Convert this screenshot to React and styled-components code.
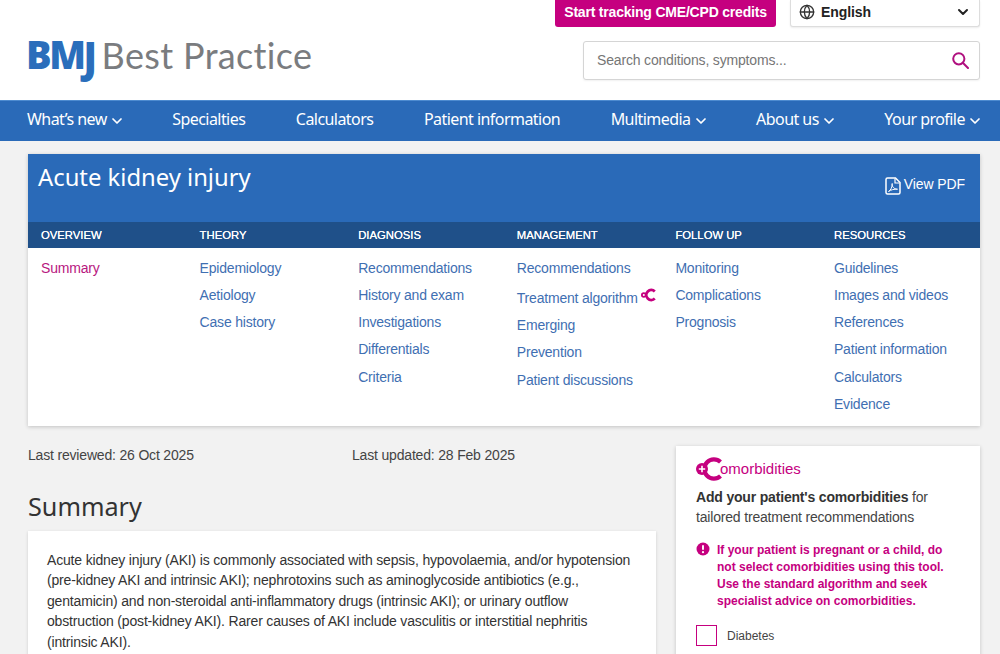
import React from "react";
import styled, { createGlobalStyle } from "styled-components";
import { ChevronDown, Globe } from "lucide-react";

const Global = createGlobalStyle`
  html, body { margin: 0; padding: 0; background: #f2f2f2; }
  #root { height: 654px; overflow: hidden; }
  * { box-sizing: border-box; }
  body { font-family: "Liberation Sans", Arial, sans-serif; color: #333; }
`;

const Header = styled.header`
  background: #fff; height: 100px; display: flex; justify-content: space-between;
  padding: 0 20px 0 28px;
`;
const Logo = styled.div`
  display: flex; align-items: baseline; height: 80px; padding-top: 30px; line-height: 48px;
`;
const LogoMark = styled.span`
  font-family: "Open Sans", sans-serif; font-weight: 800; font-size: 38px; color: #2a6ebb; letter-spacing: -2.4px; margin: 0 7px 0 -2px;
  i { font-style: normal; display: inline-block; transform: scaleY(1.12); transform-origin: 50% 30%; }
`;
const LogoText = styled.span`
  font-family: "Lato", sans-serif; font-size: 36px; color: #7a7c7f; letter-spacing: 0.35px;
`;
const HeaderRight = styled.div`
  display: flex; flex-direction: column; align-items: flex-end; gap: 14px; width: 425px;
`;
const TopRow = styled.div`
  display: flex; gap: 14px;
`;
const Cta = styled.a`
  background: #c5007f; color: #fff; font-weight: 700; font-size: 14px; letter-spacing: -0.2px; height: 27px; width: 221px;
  display: flex; align-items: center; justify-content: center; padding-bottom: 4px; border-radius: 0 0 3px 3px;
`;
const LangSelect = styled.div`
  width: 190px; height: 27px; background: #fff; border: 1px solid #ddd; border-top: 0; border-radius: 0 0 3px 3px;
  box-shadow: 0 1px 2px rgba(0,0,0,.08);
  display: flex; align-items: center; padding: 0 8px 2px 8px; font-weight: 700; font-size: 14px; letter-spacing: -0.1px; color: #222; gap: 6px;
  span { flex: 1; }
`;
const SearchBox = styled.div`
  width: 397px; height: 39px; background: #fff; border: 1px solid #d5d5d5; border-radius: 3px;
  box-shadow: 0 1px 2px rgba(0,0,0,.06);
  display: flex; align-items: center; justify-content: space-between; padding: 0 10px 2px 13px;
  font-size: 14px; letter-spacing: -0.17px; color: #767676;
`;
const SearchIcon = styled.svg`
  margin-top: 2px;
`;
const Nav = styled.nav`
  background: #2a6ab8; height: 41px; border-top: 1px solid #4d8bd0; display: flex; justify-content: space-between; align-items: center;
  padding: 0 20px 4px 27px;
`;
const NavItem = styled.a`
  color: #fff; font-family: "Noto Sans", sans-serif; font-size: 16px; letter-spacing: -0.55px; display: flex; align-items: center;
  svg { margin: 4px -3px 0 2px; }
`;
const Page = styled.main`
  padding: 13px 20px 0 28px;
`;
const TopicCard = styled.section`
  background: #fff; box-shadow: 0 1px 4px rgba(0,0,0,.2); height: 272px;
`;
const TitleBar = styled.div`
  background: #2a6ab8; height: 68px; display: flex; justify-content: space-between; padding: 5px 15px 0 10px;
`;
const Title = styled.h1`
  margin: 0; color: #fff; font-family: "Noto Sans", sans-serif; font-weight: 400; font-size: 23.8px; line-height: 36px;
`;
const PdfLink = styled.a`
  color: #fff; font-size: 14px; letter-spacing: -0.1px; display: flex; align-items: flex-start; gap: 3px; padding-top: 17px;
  svg { margin-top: 1px; }
`;
const Grid = styled.div`
  display: grid; grid-template-columns: repeat(6, 158.6px); padding-left: 13px;
`;
const HeadBand = styled(Grid)`
  background: #1f5089; height: 26px; align-items: center;
`;
const Head = styled.div`
  color: #fff; font-size: 11.3px; text-shadow: 0 0 .3px #fff;
`;
const Lists = styled(Grid)`
  padding-top: 6.5px;
`;
const Column = styled.div`
  display: flex; flex-direction: column;
`;
const TopicLink = styled.a`
  color: ${p => (p.$active ? "#b8177f" : "#3f6fb2")}; font-size: 14px; letter-spacing: -0.2px; line-height: 27.3px; display: flex; align-items: center;
  padding-top: ${p => (p.$shift ? "3px" : "0")};
`;
const Body = styled.div`
  display: grid; grid-template-columns: 628px 304px; gap: 20px; margin-top: 20px;
`;
const Dates = styled.div`
  display: flex; font-size: 14px; letter-spacing: -0.18px; color: #444; padding-top: 1px; line-height: 16px;
  span:first-child { width: 324px; }
`;
const H2 = styled.h2`
  margin: 25px 0 7px; font-family: "Noto Sans", sans-serif; font-weight: 400; font-size: 25.2px; line-height: 36px; color: #333;
`;
const SummaryCard = styled.div`
  background: #fff; box-shadow: 0 1px 3px rgba(0,0,0,.15); padding: 19px 19px 20px; font-size: 14px; letter-spacing: -0.17px; line-height: 20.4px; color: #333;
`;
const SideCard = styled.aside`
  background: #fff; box-shadow: 0 1px 4px rgba(0,0,0,.2); padding: 10px 20px 20px; height: 260px;
`;
const SideTitle = styled.div`
  display: flex; align-items: center; color: #c5007f; font-size: 15px; height: 25px;
  svg { margin-right: -3px; }
`;
const SideIntro = styled.p`
  margin: 6px 0 0; font-size: 14px; letter-spacing: -0.18px; line-height: 20px; color: #444;
  b { color: #333; }
`;
const Warning = styled.div`
  display: flex; gap: 7px; margin-top: 15px; color: #c5007f; font-size: 12px; font-weight: 700; line-height: 17px;
  svg { flex: none; }
`;
const CheckRow = styled.label`
  display: flex; align-items: center; gap: 10px; font-size: 12px; color: #444; margin-top: 15px;
`;
const Box = styled.span`
  width: 21px; height: 21px; border: 1.5px solid #c5007f; display: block;
`;

const Chevron = () => <ChevronDown size={16} strokeWidth={2.6} />;

const AlgoIcon = () => (
  <svg width="15" height="14" viewBox="0 0 15 14" style={{ marginLeft: 3, marginTop: -6 }}>
    <path d="M13.8 3.4A5 5 0 1 0 13.8 10.6" fill="none" stroke="#c5007f" strokeWidth="2.8" />
    <circle cx="2.8" cy="7" r="2.8" fill="#c5007f" />
    <circle cx="2.8" cy="7" r="1" fill="#fff" />
  </svg>
);

const ComorbIcon = () => (
  <svg width="27" height="24" viewBox="0 0 27 24">
    <path d="M24.5 5A9.6 9.6 0 1 0 24.5 19" fill="none" stroke="#c5007f" strokeWidth="4.2" />
    <circle cx="6" cy="12" r="6" fill="#c5007f" />
    <path d="M2.8 12h6.4M6 8.8v6.4" stroke="#fff" strokeWidth="1.6" />
  </svg>
);

const AlertIcon = () => (
  <svg width="14" height="14" viewBox="0 0 14 14">
    <circle cx="7" cy="7" r="6.5" fill="#c5007f" />
    <path d="M7 3.2v4.6" stroke="#fff" strokeWidth="1.9" />
    <circle cx="7" cy="10.2" r="1.1" fill="#fff" />
  </svg>
);

const PdfIcon = () => (
  <svg width="16" height="18" viewBox="0 0 16 18" fill="none" stroke="#fff">
    <path d="M2.5 1h8l4.5 4.5v10a1.5 1.5 0 0 1-1.5 1.5h-11A1.5 1.5 0 0 1 1 15.5v-13A1.5 1.5 0 0 1 2.5 1z" strokeWidth="1.5" />
    <path d="M10 1.5v4.5h4.5" strokeWidth="1.2" />
    <path d="M3.5 14.5c2.5-1.5 3.8-4.5 3.7-8-.5 3.500 2 5.500 5.300 5.700-3.200-.2-6.500.5-9 2.300z" strokeWidth="1" />
  </svg>
);

const nav = [
  ["What’s new", true], ["Specialties"], ["Calculators"], ["Patient information"],
  ["Multimedia", true], ["About us", true], ["Your profile", true],
];
const columns = [
  ["OVERVIEW", ["Summary"]],
  ["THEORY", ["Epidemiology", "Aetiology", "Case history"]],
  ["DIAGNOSIS", ["Recommendations", "History and exam", "Investigations", "Differentials", "Criteria"]],
  ["MANAGEMENT", ["Recommendations", "Treatment algorithm", "Emerging", "Prevention", "Patient discussions"]],
  ["FOLLOW UP", ["Monitoring", "Complications", "Prognosis"]],
  ["RESOURCES", ["Guidelines", "Images and videos", "References", "Patient information", "Calculators", "Evidence"]],
];

export default function App() {
  return (
    <>
      <Global />
      <Header>
        <Logo><LogoMark>BM<i>J</i></LogoMark><LogoText>Best Practice</LogoText></Logo>
        <HeaderRight>
          <TopRow>
            <Cta>Start tracking CME/CPD credits</Cta>
            <LangSelect><Globe size={16} color="#333" /><span>English</span><ChevronDown size={16} strokeWidth={3} /></LangSelect>
          </TopRow>
          <SearchBox>
            Search conditions, symptoms...
            <SearchIcon width="17" height="17" viewBox="0 0 17 17" fill="none" stroke="#b0107f" strokeWidth="2">
              <circle cx="6.8" cy="6.8" r="5.6" />
              <path d="M10.8 10.8l5.2 5.2" strokeLinecap="round" />
            </SearchIcon>
          </SearchBox>
        </HeaderRight>
      </Header>
      <Nav>
        {nav.map(([t, c]) => <NavItem key={t}>{t}{c && <Chevron />}</NavItem>)}
      </Nav>
      <Page>
        <TopicCard>
          <TitleBar>
            <Title>Acute kidney injury</Title>
            <PdfLink><PdfIcon />View PDF</PdfLink>
          </TitleBar>
          <HeadBand>{columns.map(([h]) => <Head key={h}>{h}</Head>)}</HeadBand>
          <Lists>
            {columns.map(([h, links]) => (
              <Column key={h}>
                {links.map(l => (
                  <TopicLink key={l} $active={l === "Summary"} $shift={l === "Treatment algorithm"}>
                    {l}{l === "Treatment algorithm" && <AlgoIcon />}
                  </TopicLink>
                ))}
              </Column>
            ))}
          </Lists>
        </TopicCard>
        <Body>
          <div>
            <Dates><span>Last reviewed: 26 Oct 2025</span><span>Last updated: 28 Feb 2025</span></Dates>
            <H2>Summary</H2>
            <SummaryCard>
              Acute kidney injury (AKI) is commonly associated with sepsis, hypovolaemia, and/or hypotension (pre-kidney AKI and intrinsic AKI); nephrotoxins such as aminoglycoside antibiotics (e.g., gentamicin) and non-steroidal anti-inflammatory drugs (intrinsic AKI); or urinary outflow obstruction (post-kidney AKI). Rarer causes of AKI include vasculitis or interstitial nephritis (intrinsic AKI).
            </SummaryCard>
          </div>
          <SideCard>
            <SideTitle><ComorbIcon />omorbidities</SideTitle>
            <SideIntro><b>Add your patient's comorbidities</b> for tailored treatment recommendations</SideIntro>
            <Warning><AlertIcon /><div>If your patient is pregnant or a child, do not select comorbidities using this tool. Use the standard algorithm and seek specialist advice on comorbidities.</div></Warning>
            <CheckRow><Box />Diabetes</CheckRow>
          </SideCard>
        </Body>
      </Page>
    </>
  );
}
